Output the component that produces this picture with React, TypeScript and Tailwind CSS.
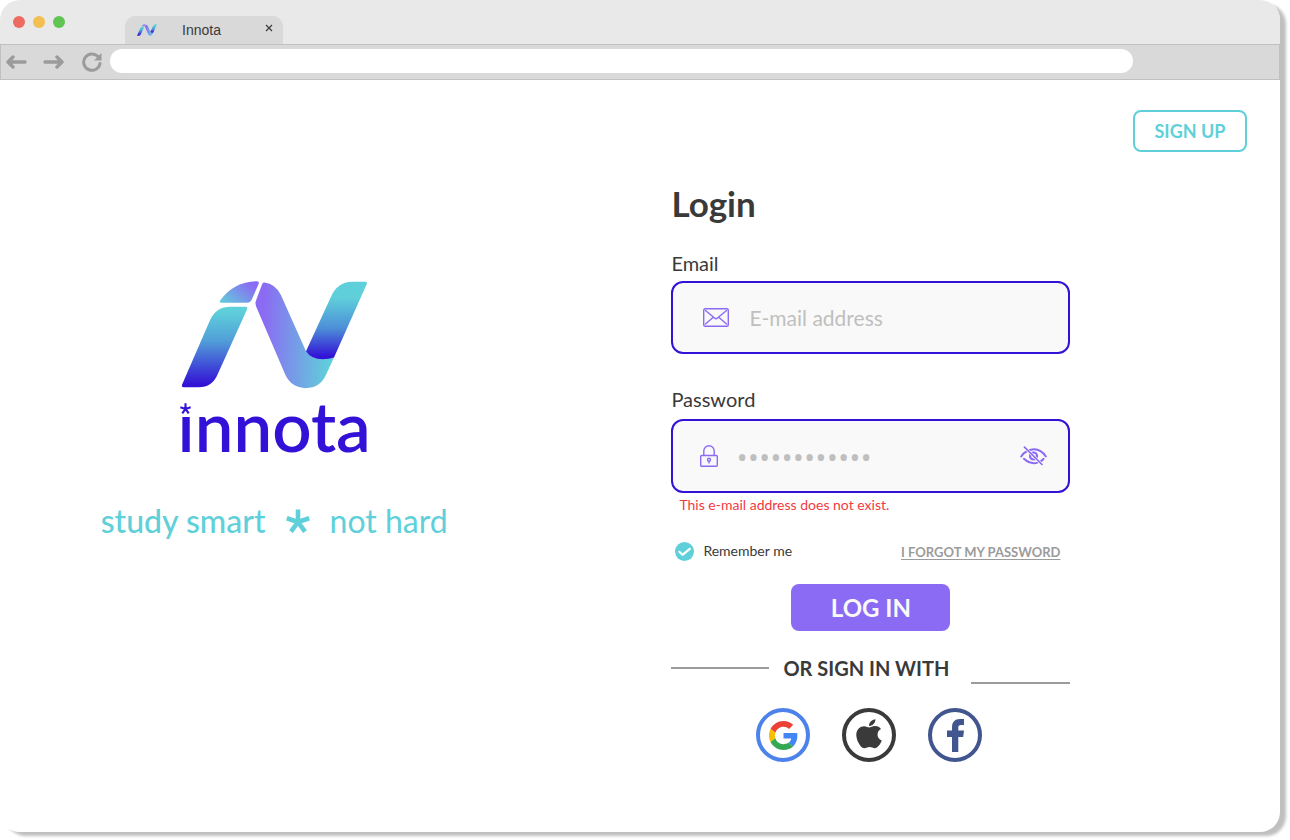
import { useId } from "react";

function LogoMark({ className }: { className: string }) {
  const id = useId();

  return (
    <svg viewBox="33 30 561 326" className={className} aria-hidden="true">
      <defs>
        <linearGradient id={`${id}-leg`} x1="0" y1="0" x2="0" y2="1">
          <stop offset="0.05" stopColor="#5fd0da" />
          <stop offset="0.42" stopColor="#519fd8" />
          <stop offset="0.97" stopColor="#3311d6" />
        </linearGradient>
        <linearGradient id={`${id}-arc`} x1="0" y1="1" x2="1" y2="0.3">
          <stop offset="0" stopColor="#5fd0da" />
          <stop offset="0.95" stopColor="#8b6bf3" />
        </linearGradient>
        <linearGradient id={`${id}-mid`} x1="0" y1="0" x2="1" y2="0.05">
          <stop offset="0.12" stopColor="#8b6bf3" />
          <stop offset="0.98" stopColor="#5fd0da" />
        </linearGradient>
        <linearGradient id={`${id}-right`} x1="0" y1="0" x2="0" y2="1">
          <stop offset="0.2" stopColor="#5fd0da" />
          <stop offset="0.6" stopColor="#4d8fd8" />
          <stop offset="0.97" stopColor="#3311d6" />
        </linearGradient>
      </defs>
      <path
        fill={`url(#${id}-arc)`}
        d="M151 90 Q192 34 260 33 Q269 33 266 41 L245 89 Q241 98 232 98 L154 98 Q146 98 151 90Z"
      />
      <path
        fill={`url(#${id}-leg)`}
        d="M36 344 L120 150 Q138 110 182 110 L227 110 Q234 110 231 118 L143 312 Q127 351 86 351 L41 351 Q34 351 36 344Z"
      />
      <path
        fill={`url(#${id}-mid)`}
        d="M283 37 Q317 41 333 75 L408 243 L492 262 L468 314 Q450 354 407 354 Q364 353 346 314 L258 108 Q254 99 258 91 L276 43 Q278 36 283 37Z"
      />
      <path
        fill={`url(#${id}-right)`}
        d="M586 35 Q593 35 590 42 L492 262 Q478 267 458 267 Q424 267 408 243 L482 82 Q502 35 546 35Z"
      />
    </svg>
  );
}

function Asterisk({ className }: { className: string }) {
  return (
    <svg viewBox="0 0 24 24" className={className} fill="none" stroke="currentColor" strokeWidth="4.6" aria-hidden="true">
      <path d="M12 13V0.500M12 13L0.800 9.200M12 13l11.200-3.800M12 13L5 22.700M12 13l7 9.700" />
    </svg>
  );
}

function BrowserBar() {
  return (
    <header>
      <div className="flex h-11 items-end bg-[#e9e9e9] pl-[13px]">
        <div className="flex gap-2 self-center">
          <span className="size-3 rounded-full bg-[#ed6b60]" />
          <span className="size-3 rounded-full bg-[#f4be50]" />
          <span className="size-3 rounded-full bg-[#61c554]" />
        </div>
        <div className="ml-[60px] flex h-7 w-[158px] items-center rounded-t-[10px] bg-[#d9d9d9] pr-2 pl-3 font-['Liberation_Sans',sans-serif] text-[#3a3a3a]">
          <LogoMark className="h-3 w-5" />
          <span className="ml-[25px] flex-1 text-sm">Innota</span>
          <button type="button" aria-label="Close tab" className="flex h-6 w-3 items-start justify-center">
            <svg viewBox="0 0 8 8" className="mt-1.5 size-2" fill="none" stroke="currentColor" strokeWidth="1.200" aria-hidden="true">
              <path d="M1 1l6 6M7 1L1 7" />
            </svg>
          </button>
        </div>
      </div>

      <div className="flex h-9 items-center border border-[#c0c0c0] bg-[#d9d9d9] pl-[5px]">
        <button type="button" aria-label="Back">
          <svg viewBox="0 0 21 14" className="h-3.5 w-[21px]" fill="none" stroke="#9b9b9b" strokeWidth="3.400" strokeLinecap="round" strokeLinejoin="round">
            <path d="M19 7H3M7 2L2 7l5 5" />
          </svg>
        </button>
        <button type="button" aria-label="Forward" className="ml-4">
          <svg viewBox="0 0 21 14" className="h-3.5 w-[21px]" fill="none" stroke="#9b9b9b" strokeWidth="3.400" strokeLinecap="round" strokeLinejoin="round">
            <path d="M2 7h16M14 2l5 5-5 5" />
          </svg>
        </button>
        <button type="button" aria-label="Reload" className="ml-[18px]">
          <svg viewBox="0 0 20 20" className="size-5" fill="none" stroke="#9b9b9b" strokeWidth="3">
            <path d="M18 11.500A8.200 8.200 0 1 1 15.600 4.200" strokeLinecap="round" />
            <path d="M19.500 1v7.500H12z" fill="#9b9b9b" stroke="none" />
          </svg>
        </button>
        <input
          type="text"
          aria-label="Address"
          className="mr-[146px] mb-0.5 ml-2 h-6 min-w-0 flex-1 rounded-full bg-white px-4 text-sm outline-none"
        />
      </div>
    </header>
  );
}

function MailIcon() {
  return (
    <svg viewBox="0 0 26 19" className="h-[19px] w-[26px]" fill="none" stroke="#8b6bf3" strokeLinecap="round" aria-hidden="true">
      <rect x="0.700" y="0.700" width="24.600" height="17.600" rx="1.500" strokeWidth="1.400" />
      <path d="M2.500 2.500l9 7.500q1.500 1.300 3 0l9-7.500M2.500 16l7.500-6.500M23.500 16L16 9.500" strokeWidth="1.400" />
    </svg>
  );
}

function LockIcon() {
  return (
    <svg viewBox="0 0 18 22" className="h-[22px] w-[18px]" fill="none" stroke="#8b6bf3" strokeWidth="1.400" aria-hidden="true">
      <rect x="0.700" y="10.500" width="16.600" height="10.800" rx="1" />
      <path d="M3.800 10.500V6a5.200 5.200 0 0 1 10.400 0v4.500" />
      <circle cx="9" cy="14.800" r="1.500" />
      <path d="M9 16.300v2.200" />
    </svg>
  );
}

function HiddenEyeIcon() {
  return (
    <svg viewBox="0 0 27 20" className="h-5 w-[27px]" fill="none" stroke="#8b6bf3" strokeLinecap="round" strokeWidth="2" aria-hidden="true">
      <path d="M1.200 10.500Q3.500 7 6.500 5.500M10 4Q19.500 1.200 25.800 10.500M4 12.800Q10.500 18.800 17.500 16.600M21 15Q22.500 14.200 23.500 12.800" />
      <circle cx="13.500" cy="10" r="3.500" strokeWidth="2.200" />
      <path d="M4.500 1.200L22 18.500" strokeWidth="3" stroke="#f9f9f9" />
      <path d="M4.500 1.200L22 18.500" strokeWidth="1.700" />
    </svg>
  );
}

function GoogleIcon() {
  return (
    <svg viewBox="0 0 48 48" className="size-[29px]" aria-hidden="true">
      <path fill="#EA4335" d="M24 9.500c3.540 0 6.710 1.220 9.210 3.600l6.850-6.850C35.900 2.380 30.470 0 24 0 14.620 0 6.510 5.380 2.560 13.220l7.980 6.190C12.430 13.720 17.740 9.500 24 9.500z" />
      <path fill="#4285F4" d="M46.980 24.550c0-1.570-.15-3.090-.38-4.550H24v9.020h12.940c-.58 2.960-2.260 5.480-4.780 7.180l7.730 6c4.510-4.180 7.090-10.360 7.090-17.650z" />
      <path fill="#FBBC05" d="M10.530 28.590c-.48-1.450-.76-2.990-.76-4.590s.27-3.140.76-4.590l-7.980-6.190C.92 16.460 0 20.120 0 24c0 3.880.92 7.540 2.560 10.780l7.970-6.190z" />
      <path fill="#34A853" d="M24 48c6.480 0 11.930-2.130 15.890-5.810l-7.730-6c-2.150 1.450-4.920 2.300-8.160 2.300-6.260 0-11.570-4.220-13.470-9.910l-7.980 6.190C6.510 42.620 14.620 48 24 48z" />
    </svg>
  );
}

function AppleIcon() {
  return (
    <svg viewBox="0 0 384 480" className="mb-1 h-[31px] w-[26px]" fill="currentColor" preserveAspectRatio="none" aria-hidden="true">
      <path d="M319 255c0-37 16-64 50-85-19-27-47-42-85-45-35-3-74 21-88 21-15 0-49-20-76-20C64 127 4 171 4 261c0 26 5 54 15 82 13 37 59 127 107 125 25 0 43-18 76-18 32 0 48 18 76 18 49-1 90-82 102-119-65-31-61-90-61-94zM262 90c27-32 25-62 24-72-24 1-52 16-68 35-17 20-28 44-25 71 26 2 50-11 69-34z" />
    </svg>
  );
}

function FacebookIcon() {
  return (
    <svg viewBox="0 0 17 33" className="h-[33px] w-[17px]" fill="currentColor" aria-hidden="true">
      <path d="M5 33V18H0v-6.500h5V8.500C5 3 7.800 0 13 0h4v6h-3c-2 0-2.700 1-2.700 2.800v2.700H17l-.8 6.500h-4.900v15z" />
    </svg>
  );
}

export default function App() {
  return (
    <div className="flex min-h-screen bg-white pr-2.5 pb-2 font-[Lato,sans-serif] text-[#3a3a3a]">
      <div className="flex-1 overflow-hidden rounded-[20px] bg-white shadow-[6px_4px_3px_rgba(0,0,0,0.25)]">
        <BrowserBar />

        <nav className="flex justify-end pt-[30px] pr-[33px]">
          <button type="button" className="h-[42px] w-[114px] rounded-lg border-2 border-[#5fd0da] text-lg font-bold text-[#5fd0da]">
            SIGN UP
          </button>
        </nav>

        <main className="flex">
          {/* Brand */}
          <section className="flex w-[43%] flex-col items-center pt-32 pr-0.5">
            <LogoMark className="h-[109px] w-[187px]" />
            <div className="relative mt-1.5 text-[69px] leading-[62px] font-semibold text-[#3311d6]">
              <span>ınnota</span>
              <Asterisk className="absolute top-2 left-0.5 size-[11px]" />
            </div>
            <p className="mt-11 flex items-center gap-5 text-[32px] leading-10 text-[#5fd0da]">
              <span className="font-medium">study smart</span>
              <Asterisk className="size-6" />
              <span>not hard</span>
            </p>
          </section>

          {/* Login form */}
          <section className="flex-1 pt-8 pl-[121px]">
            <form className="flex w-[399px] flex-col" onSubmit={(e) => e.preventDefault()}>
              <h1 className="text-[35px] leading-[38px] font-bold">Login</h1>

              <label htmlFor="email" className="mt-[27px] text-xl leading-7">
                Email
              </label>
              <div className="mt-1 flex h-[73px] items-center gap-5 rounded-xl border-2 border-[#3311d6] bg-[#f9f9f9] px-[30px]">
                <MailIcon />
                <input
                  id="email"
                  type="email"
                  placeholder="E-mail address"
                  className="min-w-0 flex-1 bg-transparent text-[21px] outline-none placeholder:text-[#bfbfbf]"
                />
              </div>

              <label htmlFor="password" className="mt-[31px] text-xl leading-7">
                Password
              </label>
              <div className="mt-1.5 flex h-[74px] items-center gap-[18px] rounded-xl border-2 border-[#3311d6] bg-[#f9f9f9] pr-[21px] pl-[27px]">
                <LockIcon />
                <input
                  id="password"
                  type="password"
                  defaultValue="innotainnota"
                  className="h-10 min-w-0 flex-1 bg-transparent font-['Open_Sans',sans-serif] text-[30px] text-[#bfbfbf] outline-none"
                />
                <button type="button" aria-label="Show password">
                  <HiddenEyeIcon />
                </button>
              </div>
              <p className="mt-0.5 pl-2 text-sm leading-5 text-[#f23a3f]">This e-mail address does not exist.</p>

              <div className="mt-[26px] flex h-5 items-center justify-between pr-2.5 pl-1">
                <label className="flex items-center gap-[9px] text-sm">
                  <span className="grid">
                    <input
                      type="checkbox"
                      defaultChecked
                      className="peer col-start-1 row-start-1 size-[19px] appearance-none rounded-full bg-[#d9d9d9] checked:bg-[#5fd0da]"
                    />
                    <svg
                      viewBox="0 0 19 19"
                      className="pointer-events-none invisible col-start-1 row-start-1 size-[19px] peer-checked:visible"
                      fill="none"
                      stroke="#ffffff"
                      strokeWidth="2.200"
                      strokeLinecap="round"
                      strokeLinejoin="round"
                      aria-hidden="true"
                    >
                      <path d="M4.300 9.800l3.200 3 7.300-6" />
                    </svg>
                  </span>
                  Remember me
                </label>
                <a href="#forgot" className="pt-1 text-[13px] font-bold text-[#9b9b9b] underline underline-offset-2">
                  I FORGOT MY PASSWORD
                </a>
              </div>

              <button
                type="submit"
                className="mt-[23px] h-[47px] w-[159px] self-center rounded-lg bg-[#8b6bf3] text-2xl font-bold text-[#f9f9f9]"
              >
                LOG IN
              </button>

              <div className="mt-5 flex h-[33px] items-center">
                <span className="h-0.5 w-[98px] bg-[#9b9b9b]" />
                <span className="ml-3.5 text-xl font-bold">OR SIGN IN WITH</span>
                <span className="ml-auto h-0.5 w-[99px] self-end bg-[#9b9b9b]" />
              </div>

              <div className="mt-6 flex justify-center gap-8 pr-[3px]">
                <button type="button" aria-label="Sign in with Google" className="flex size-[54px] items-center justify-center rounded-full border-4 border-[#4c82ea]">
                  <GoogleIcon />
                </button>
                <button type="button" aria-label="Sign in with Apple" className="flex size-[54px] items-center justify-center rounded-full border-4 border-[#3a3a3a]">
                  <AppleIcon />
                </button>
                <button type="button" aria-label="Sign in with Facebook" className="flex size-[54px] items-center justify-center rounded-full border-4 border-[#41558f] text-[#41558f]">
                  <FacebookIcon />
                </button>
              </div>
            </form>
          </section>
        </main>
      </div>
    </div>
  );
}
